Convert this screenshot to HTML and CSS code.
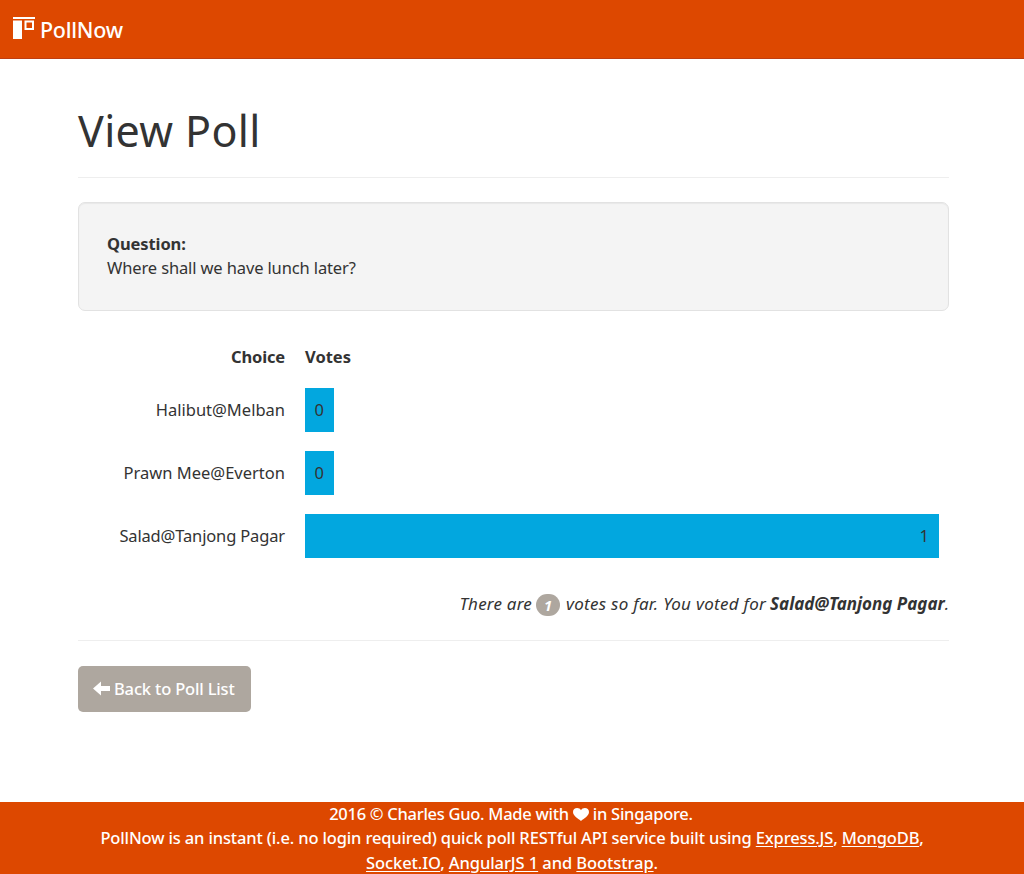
FILE: index.html
```html
<!DOCTYPE html>
<html lang="en">
<head>
<meta charset="utf-8">
<title>PollNow</title>
<link rel="stylesheet" href="styles.css">
</head>
<body>
<header class="navbar">
  <a class="brand">
    <svg class="brand-icon" width="22" height="22" viewBox="0 0 22 22"><path fill="#fff" fill-rule="evenodd" d="M0 0h22v2H0zM0 3.500h9V22H0zM11.500 3.500H21V13h-9.500zM13.500 5.500V11H19V5.500z"/></svg>
    <span class="brand-name">PollNow</span>
  </a>
</header>
<main class="container">
  <h1 class="page-title">View Poll</h1>
  <section class="well">
    <div class="question-label">Question:</div>
    <div class="question">Where shall we have lunch later?</div>
  </section>
  <section class="results">
    <strong class="choice choice-head">Choice</strong><strong>Votes</strong>
    <span class="choice">Halibut@Melban</span><div class="bar">0</div>
    <span class="choice">Prawn Mee@Everton</span><div class="bar">0</div>
    <span class="choice choice-long">Salad@Tanjong Pagar</span><div class="bar bar-full">1</div>
  </section>
  <p class="summary"><span class="count-lead">There are</span><span class="badge">1</span><span class="count-tail">votes so far. You voted for</span><strong class="voted">Salad@Tanjong Pagar</strong><span>.</span></p>
  <a class="btn">
    <svg class="arrow" width="17" height="15" viewBox="0 0 17 15"><path fill="#fff" d="M0 7.500 8 .5V5h9v5H8v4.500z"/></svg>
    <span>Back to Poll List</span>
  </a>
</main>
<footer class="footer">
  <div class="credit">2016 © Charles Guo. Made with <svg class="heart" width="16" height="13" viewBox="0 0 16 13"><path fill="#fff" d="M8 13C5.500 10.500 0 8.300 0 4 0 1.600 1.800 0 4.100 0 5.800 0 7.300.9 8 2.300 8.700.9 10.200 0 11.900 0 14.200 0 16 1.600 16 4 16 8.300 10.500 10.500 8 13z"/></svg> in Singapore.</div>
  <div class="about">PollNow is an instant (i.e. no login required) quick poll RESTful API service built using <a>Express.JS</a>, <a>MongoDB</a>,</div>
  <div class="stack"><a>Socket.IO</a>, <a>AngularJS 1</a> and <a>Bootstrap</a>.</div>
</footer>
</body>
</html>
```
FILE: styles.css
```css
* { box-sizing: border-box; }
body {
  margin: 0;
  height: 874px;
  display: flex;
  flex-direction: column;
  overflow: hidden;
  background: #fff;
  color: #333;
  font-family: "Noto Sans", "Open Sans", sans-serif;
  font-size: 16.5px;
  line-height: 24.3px;
  white-space: nowrap;
}
.navbar {
  height: 59px;
  flex: none;
  padding: 17px 13px 0;
  background: #dd4800;
  border-bottom: 1px solid #bf3e11;
}
.brand { display: flex; gap: 5px; color: #fff; font-size: 21.5px; font-weight: 500; line-height: 25px; }
.brand-icon { flex: none; }
.brand-name { letter-spacing: -0.25px; }
.container { flex: 1; padding: 43px 75px 0 78px; }
.page-title {
  margin: 0 0 24px;
  height: 76px;
  border-bottom: 1px solid #eee;
  font-size: 43px;
  font-weight: 400;
  line-height: 57px;
  letter-spacing: 0.35px;
}
.well {
  height: 109px;
  padding: 29px 28px;
  background: #f4f4f4;
  border: 1px solid #e2e2e2;
  border-radius: 7px;
  box-shadow: inset 0 1px 1px rgba(0, 0, 0, 0.05);
}
.question-label { font-weight: 700; letter-spacing: -0.1px; }
.question { letter-spacing: -0.13px; }
.results {
  display: grid;
  grid-template-columns: 207px 634px;
  grid-template-rows: 24px 44px 44px 44px;
  column-gap: 20px;
  row-gap: 19px;
  align-items: center;
  padding-top: 34px;
}
.choice { justify-self: end; }
.choice-head { letter-spacing: -0.15px; }
.choice-long { letter-spacing: -0.15px; }
.bar {
  width: 29px;
  height: 100%;
  padding: 10px 10px 0 9px;
  background: #02a7df;
  text-align: right;
}
.bar-full { width: 634px; }
.summary {
  display: flex;
  justify-content: flex-end;
  align-items: center;
  height: 83px;
  margin: 0 0 25px;
  padding-top: 10px;
  border-bottom: 1px solid #eee;
  font-size: 17px;
  font-style: italic;
}
.count-lead { letter-spacing: 0.2px; }
.count-tail { letter-spacing: 0.28px; }
.voted { margin-left: 4px; }
.badge {
  width: 24px;
  height: 22px;
  margin: 1px 6px 0 4px;
  border-radius: 12px;
  background: #aea79f;
  color: #fff;
  font-size: 14.5px;
  font-weight: 700;
  line-height: 22px;
  text-align: center;
}
.btn {
  display: flex;
  align-items: center;
  gap: 4px;
  width: 173px;
  height: 46px;
  padding-left: 15px;
  border-radius: 5px;
  background: #aea79f;
  color: #fff;
  font-weight: 500;
  letter-spacing: -0.17px;
}
.arrow { margin-bottom: 2px; }
.footer {
  height: 72px;
  flex: none;
  background: #dd4800;
  color: #fff;
  font-weight: 500;
  text-align: center;
}
.footer a { text-decoration: underline; text-underline-offset: 2px; }
.credit { letter-spacing: -0.28px; padding-right: 2px; }
.about { letter-spacing: -0.15px; }
.stack { letter-spacing: -0.08px; }
.heart { vertical-align: -1px; }
```
